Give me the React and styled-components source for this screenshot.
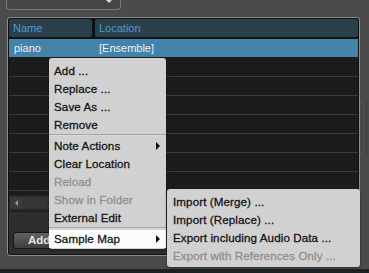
import React from 'react';
import styled, { createGlobalStyle } from 'styled-components';

const GlobalStyle = createGlobalStyle`
	html, body {
		margin: 0;
		padding: 0;
		background: #4b4b4b;
		font-family: "Liberation Sans", Arial, sans-serif;
		font-size: 11px;
	}
	#root {
		width: 369px;
		height: 273px;
		overflow: hidden;
	}
`;

const Screen = styled.div`
	position: relative;
	width: 369px;
	height: 273px;
	display: flex;
	flex-direction: column;
`;

const Dropdown = styled.div`
	margin-left: 6px;
	width: 105px;
	height: 9px;
	border: 1px solid #7a7a7a;
	border-top: none;
	border-radius: 0 0 4px 4px;
	background: #454545;
	display: flex;
	justify-content: flex-end;
	padding-right: 8px;
	box-sizing: content-box;
`;

const Caret = styled.div`
	width: 0;
	height: 0;
	border-left: 3px solid transparent;
	border-right: 3px solid transparent;
	border-top: 3px solid #d8d8d8;
`;

const Middle = styled.div`
	display: flex;
	margin-top: 7px;
`;

const Panel = styled.div`
	margin-left: 7px;
	width: 349px;
	height: 235px;
	border: 1px solid #8d8d8d;
	border-radius: 3px;
	background: #111;
	padding: 1px;
	box-sizing: content-box;
	display: flex;
	flex-direction: column;
`;

const Gutter = styled.div`
	margin: 83px 0 0 6px;
	width: 1px;
	height: 57px;
	background: #3c3c3c;
`;

const HeaderRow = styled.div`
	display: flex;
	gap: 3px;
	height: 18px;
	margin-bottom: 2px;
`;

const HeaderCell = styled.div`
	flex: ${p => (p.$grow ? 1 : 'none')};
	width: ${p => (p.$width ? `${p.$width}px` : 'auto')};
	background: #2b404d;
	border-radius: 2px;
	color: #4b9dcc;
	line-height: 18px;
	padding-left: 4px;
`;

const Body = styled.div`
	height: 156px;
	background: #1c1c1c;
	overflow: hidden;
`;

const Row = styled.div`
	display: flex;
	height: 18px;
	line-height: 18px;
	border-bottom: 1px solid ${p => (p.$selected ? '#1c1c1c' : '#3b3b3b')};
	background: ${p => (p.$selected ? '#4382a9' : 'transparent')};
	color: #eef3f6;
`;

const Cell = styled.div`
	width: ${p => p.$width}px;
	padding-left: 5px;
	box-sizing: border-box;
	flex: ${p => (p.$grow ? 1 : 'none')};
`;

const ScrollBar = styled.div`
	height: 16px;
	background: #262626;
	display: flex;
	align-items: center;
	padding: 0 1px;
`;

const ScrollArrow = styled.div`
	width: 12px;
	height: 12px;
	background: #3a3a3a;
	display: flex;
	align-items: center;
	justify-content: center;
	&::before {
		content: '';
		border-top: 3px solid transparent;
		border-bottom: 3px solid transparent;
		border-right: 3px solid #9a9a9a;
	}
`;

const ScrollTrack = styled.div`
	flex: 1;
	height: 12px;
	background: #353535;
`;

const Footer = styled.div`
	flex: 1;
	background: #2e2e2e;
	border-top: 1px solid #1a1a1a;
	display: flex;
	align-items: flex-end;
	padding: 0 0 5px 4px;
`;

const Button = styled.div`
	width: 62px;
	height: 15px;
	border: 1px solid #151515;
	border-radius: 3px;
	background: linear-gradient(#626262, #3e3e3e);
	color: #e6e6e6;
	font-weight: bold;
	font-size: 11.5px;
	line-height: 15px;
	padding-left: 14px;
	box-sizing: content-box;
`;

const BottomStrip = styled.div`
	margin-top: auto;
	height: 4px;
	background: #1b2226;
`;

const Menu = styled.div`
	position: absolute;
	left: ${p => p.$left}px;
	top: ${p => p.$top}px;
	width: ${p => p.$width}px;
	background: #d1d1d1;
	border-radius: 3px;
	padding: 4px 0 ${p => p.$padBottom}px;
	box-shadow: 0 1px 3px rgba(0, 0, 0, 0.45);
	font-size: 11.6px;
	letter-spacing: 0.1px;
`;

const Item = styled.div`
	height: 18px;
	line-height: 18px;
	padding-left: ${p => p.$indent}px;
	color: ${p => (p.$disabled ? '#8f8f8f' : '#141414')};
	background: ${p => (p.$active ? '#fbfbfb' : 'transparent')};
	display: flex;
	align-items: center;
	justify-content: space-between;
	padding-right: 6px;
	-webkit-text-stroke: 0.3px currentColor;
	white-space: nowrap;
`;

const Arrow = styled.span`
	width: 0;
	height: 0;
	border-top: 4px solid transparent;
	border-bottom: 4px solid transparent;
	border-left: 4px solid #111;
`;

const Separator = styled.div`
	height: 1px;
	margin: 0 0 1px;
	background: #a5a5a5;
	border-bottom: 1px solid #dadada;
`;

const mainItems = [
	{ label: 'Add ...' },
	{ label: 'Replace ...' },
	{ label: 'Save As ...' },
	{ label: 'Remove' },
	{ sep: true },
	{ label: 'Note Actions', sub: true },
	{ label: 'Clear Location' },
	{ label: 'Reload', disabled: true },
	{ label: 'Show in Folder', disabled: true },
	{ label: 'External Edit' },
	{ sep: true },
	{ label: 'Sample Map', sub: true, active: true },
];

const subItems = [
	{ label: 'Import (Merge) ...' },
	{ label: 'Import (Replace) ...' },
	{ label: 'Export including Audio Data ...' },
	{ label: 'Export with References Only ...', disabled: true },
];

const MenuList = ({ items, indent }) =>
	items.map((it, i) =>
		it.sep ? (
			<Separator key={i} />
		) : (
			<Item key={i} $indent={indent} $disabled={it.disabled} $active={it.active}>
				<span>{it.label}</span>
				{it.sub && <Arrow />}
			</Item>
		)
	);

export default function App() {
	return (
		<Screen>
			<GlobalStyle />
			<Dropdown>
				<Caret />
			</Dropdown>
			<Middle>
				<Panel>
					<HeaderRow>
						<HeaderCell $width={79}>Name</HeaderCell>
						<HeaderCell $grow>Location</HeaderCell>
					</HeaderRow>
					<Body>
						<Row $selected>
							<Cell $width={85}>piano</Cell>
							<Cell $grow>[Ensemble]</Cell>
						</Row>
						{Array.from({ length: 8 }).map((_, i) => (
							<Row key={i} />
						))}
					</Body>
					<ScrollBar>
						<ScrollArrow />
						<ScrollTrack />
					</ScrollBar>
					<Footer>
						<Button>Add</Button>
					</Footer>
				</Panel>
				<Gutter />
			</Middle>
			<BottomStrip />
			<Menu $left={49} $top={58} $width={117} $padBottom={1}>
				<MenuList items={mainItems} indent={5} />
			</Menu>
			<Menu $left={167} $top={189} $width={193} $padBottom={2}>
				<MenuList items={subItems} indent={6} />
			</Menu>
		</Screen>
	);
}
